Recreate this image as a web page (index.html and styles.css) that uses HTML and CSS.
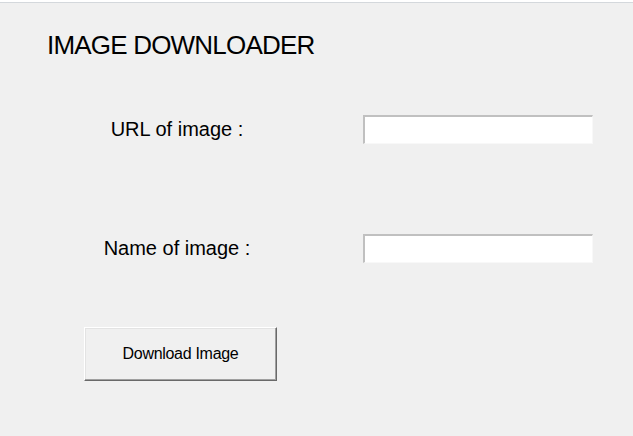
FILE: index.html
```html
<!DOCTYPE html>
<html>
<head>
<meta charset="utf-8">
<link rel="stylesheet" href="styles.css">
</head>
<body>
<div class="window">
  <div class="title">IMAGE DOWNLOADER</div>
  <div class="row row-url">
    <label class="label">URL of image :</label>
    <input class="entry" type="text">
  </div>
  <div class="row row-name">
    <label class="label">Name of image :</label>
    <input class="entry" type="text">
  </div>
  <button class="btn">Download Image</button>
</div>
</body>
</html>
```
FILE: styles.css
```css
html, body {
  margin: 0;
  padding: 0;
  background: #f0f0f0;
}
.window {
  height: 436px;
  box-sizing: border-box;
  padding-top: 2px;
  border-top: 2px solid #ffffff;
  position: relative;
  font-family: "Liberation Sans", Arial, sans-serif;
  color: #000;
}
.window::before {
  content: "";
  display: block;
  height: 1px;
  background: #d4d8dc;
  margin-top: -2px;
}
.title {
  margin: 28px 0 0 47px;
  font-size: 26px;
  line-height: 29px;
  letter-spacing: -0.8px;
  white-space: nowrap;
}
.row {
  display: grid;
  grid-template-columns: 260px 230px;
  column-gap: 56px;
  align-items: center;
  margin-left: 47px;
}
.row-url { margin-top: 55px; }
.row-name { margin-top: 90px; }
.label {
  text-align: center;
  font-size: 20px;
  line-height: 23px;
  letter-spacing: 0;
  white-space: nowrap;
}
.entry {
  width: 230px;
  height: 29px;
  box-sizing: border-box;
  margin: 0;
  padding: 0;
  background: #ffffff;
  border-style: solid;
  border-width: 2px 1px 1px 2px;
  border-color: #c0c0c0 #f8f8f8 #f8f8f8 #c0c0c0;
  outline: none;
}
.btn {
  display: block;
  margin: 64px 0 0 84px;
  width: 193px;
  height: 54px;
  box-sizing: border-box;
  padding: 0;
  background: #f0f0f0;
  border-style: solid;
  border-width: 1px;
  border-color: #ffffff #696969 #696969 #ffffff;
  box-shadow: inset -1px -1px #a0a0a0, inset 1px 1px #e3e3e3;
  font-family: "Liberation Sans", Arial, sans-serif;
  font-size: 16px;
  letter-spacing: -0.3px;
  color: #000;
}
```
